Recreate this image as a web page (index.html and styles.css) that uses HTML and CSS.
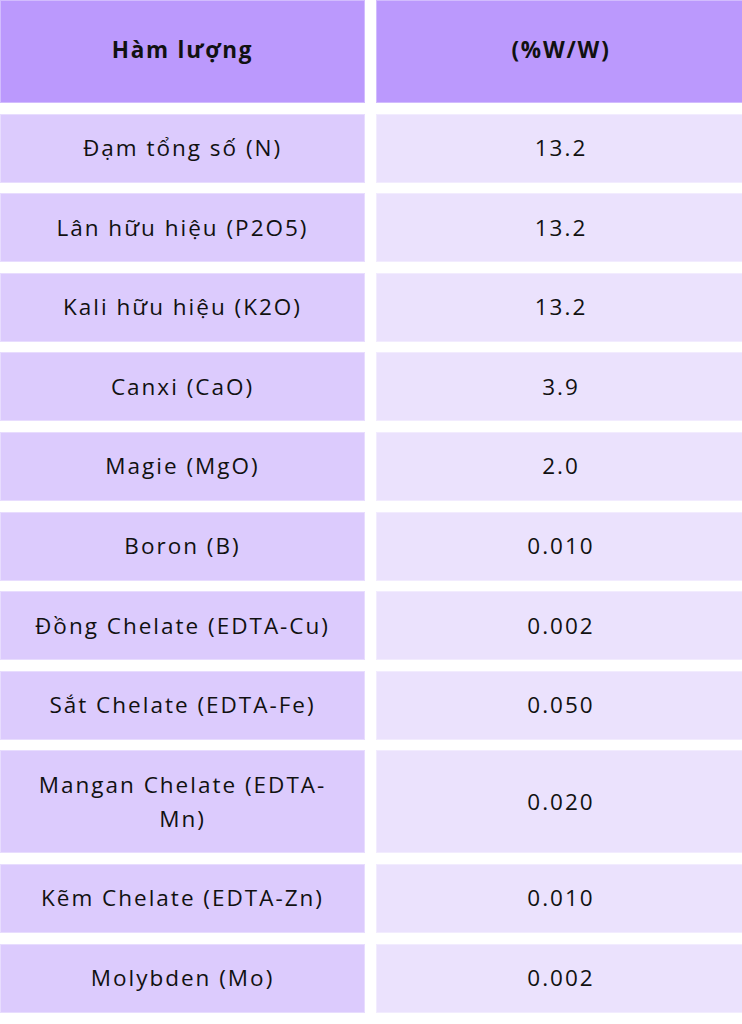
FILE: index.html
```html
<!DOCTYPE html>
<html lang="vi">
<head>
<meta charset="utf-8">
<title>Hàm lượng</title>
<link rel="stylesheet" href="styles.css">
</head>
<body>
<div class="table">
  <div class="cell head">Hàm lượng</div>
  <div class="cell head">(%W/W)</div>

  <div class="cell name">Đạm tổng số (N)</div>
  <div class="cell val">13.2</div>

  <div class="cell name">Lân hữu hiệu (P2O5)</div>
  <div class="cell val">13.2</div>

  <div class="cell name">Kali hữu hiệu (K2O)</div>
  <div class="cell val">13.2</div>

  <div class="cell name">Canxi (CaO)</div>
  <div class="cell val">3.9</div>

  <div class="cell name">Magie (MgO)</div>
  <div class="cell val">2.0</div>

  <div class="cell name">Boron (B)</div>
  <div class="cell val">0.010</div>

  <div class="cell name">Đồng Chelate (EDTA-Cu)</div>
  <div class="cell val">0.002</div>

  <div class="cell name">Sắt Chelate (EDTA-Fe)</div>
  <div class="cell val">0.050</div>

  <div class="cell name">Mangan Chelate (EDTA-<br>Mn)</div>
  <div class="cell val">0.020</div>

  <div class="cell name">Kẽm Chelate (EDTA-Zn)</div>
  <div class="cell val">0.010</div>

  <div class="cell name">Molybden (Mo)</div>
  <div class="cell val">0.002</div>
</div>
</body>
</html>
```
FILE: styles.css
```css
html, body {
  margin: 0;
  padding: 0;
  background: #ffffff;
}

body {
  width: 742px;
  overflow: hidden;
  font-family: "Open Sans", "Noto Sans", "Liberation Sans", sans-serif;
  color: #111111;
}

.table {
  display: grid;
  grid-template-columns: 365px 370px;
  column-gap: 11px;
  row-gap: 10.6px;
}

.cell {
  display: flex;
  align-items: center;
  justify-content: center;
  text-align: center;
  box-sizing: border-box;
  font-size: 22.5px;
  letter-spacing: 2px;
  line-height: 34px;
  padding: 16.5px 10px;
  border: 1px solid rgba(255, 255, 255, 0.35);
}

.head {
  height: 103px;
  padding-bottom: 20px;
  background: #bb99fd;
  font-weight: 700;
  letter-spacing: 1.8px;
}

.name {
  background: #dccbfd;
}

.val {
  background: #ebe2fd;
}
```
